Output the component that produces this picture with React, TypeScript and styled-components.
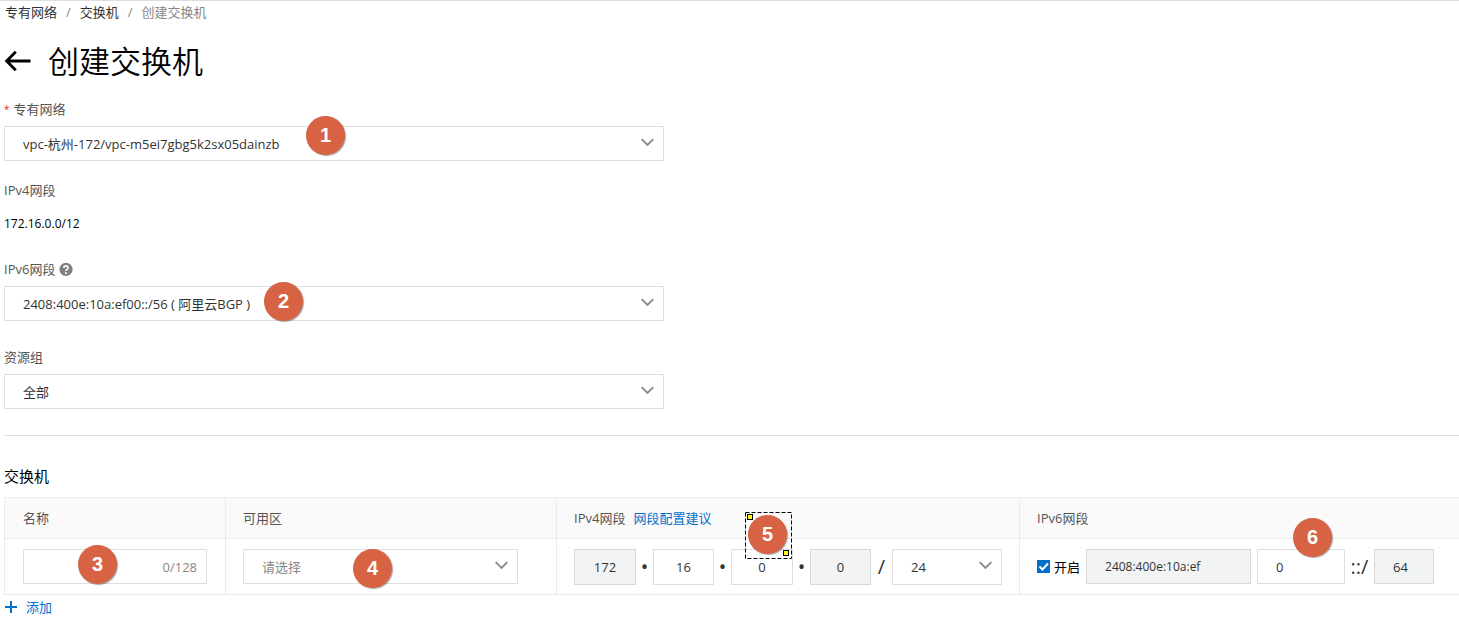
import React from "react";
import styled, { createGlobalStyle, css } from "styled-components";

const GlobalStyle = createGlobalStyle`
  *, *::before, *::after { box-sizing: border-box; }
  body {
    margin: 0;
    background: #fff;
    color: #333;
    font-family: "Open Sans", "Noto Sans CJK SC", sans-serif;
    font-size: 13px;
    line-height: 20px;
    overflow: hidden;
  }
  input, select, button { font: inherit; color: inherit; margin: 0; }
`;

const Page = styled.main`
  border-top: 1px solid #dedede;
  padding-left: 4px;
`;

const Breadcrumb = styled.nav`
  display: flex;
  gap: 9px;
  padding: 1px 0 0 1px;
  a { color: #333; text-decoration: none; }
  span { color: #888; }
`;

const TitleBar = styled.header`
  display: flex;
  align-items: center;
  gap: 16px;
  height: 44px;
  margin: 17px 0 16px;
`;

const BackButton = styled.button`
  display: flex;
  padding: 0;
  border: 0;
  background: none;
  color: #000;
`;

const Title = styled.h1`
  margin: 0;
  color: #000;
  font-size: 31px;
  line-height: 44px;
  font-weight: 350;
`;

const Form = styled.form`
  margin: 0;
`;

const Field = styled.div<{ $tight?: boolean }>`
  max-width: 660px;
  margin-bottom: ${(p) => (p.$tight ? 19 : 26)}px;
`;

const labelStyle = css`
  display: flex;
  align-items: center;
  gap: 4px;
  height: 20px;
  margin-bottom: 7px;
  color: #555;
`;

const Label = styled.label`${labelStyle}`;
const Caption = styled.div`${labelStyle}`;

const Required = styled.span`
  color: #d93026;
  font-size: 10px;
`;

const Value = styled.div`
  color: #000;
  font-size: 12px;
  line-height: 33px;
`;

const SelectBox = styled.div<{ $width?: number; $tall?: boolean }>`
  position: relative;
  width: ${(p) => (p.$width ? `${p.$width}px` : "100%")};
  height: ${(p) => (p.$tall ? 36 : 35)}px;
`;

const NativeSelect = styled.select<{ $muted?: boolean }>`
  appearance: none;
  width: 100%;
  height: 100%;
  padding: 0 40px 0 18px;
  border: 1px solid #dedede;
  border-radius: 0;
  background: #fff;
  color: ${(p) => (p.$muted ? "#888" : "#333")};
`;

const Chevron = styled.svg`
  position: absolute;
  right: 10px;
  top: 12px;
  pointer-events: none;
`;

const Divider = styled.hr`
  margin: 0 0 30px;
  border: 0;
  border-top: 1px solid #dedede;
`;

const SectionTitle = styled.h2`
  margin: 0 0 11px;
  color: #000;
  font-size: 15px;
  line-height: 20px;
  font-weight: 400;
`;

const Table = styled.table`
  width: 100%;
  min-width: 1455px;
  table-layout: fixed;
  border-collapse: separate;
  border-spacing: 0;
  border-top: 1px solid #ebebeb;
  th, td {
    text-align: left;
    font-weight: 400;
    padding: 0 0 0 18px;
    border-left: 1px solid #ebebeb;
    border-bottom: 1px solid #ebebeb;
  }
  th + th, td + td { padding-left: 17px; }
  th { height: 41px; background: #fafafa; color: #555; }
  td { height: 56px; }
`;

const Col = styled.col<{ $width?: number }>`
  width: ${(p) => (p.$width ? `${p.$width}px` : "auto")};
`;

const Inline = styled.div<{ $gap?: number }>`
  position: relative;
  display: flex;
  align-items: center;
  gap: ${(p) => p.$gap ?? 0}px;
`;

const Link = styled.a`
  color: #0070cc;
  text-decoration: none;
`;

const NameBox = styled.label`
  display: flex;
  align-items: center;
  width: 184px;
  height: 35px;
  padding: 0 9px;
  border: 1px solid #dedede;
  color: #888;
  input {
    flex: 1;
    min-width: 0;
    border: 0;
    background: none;
    outline: 0;
  }
`;

const TextInput = styled.input<{ $width: number; $octet?: boolean; $small?: boolean }>`
  width: ${(p) => p.$width}px;
  height: ${(p) => (p.$octet ? 36 : 35)}px;
  padding: ${(p) => (p.$octet ? "0" : "0 18px")};
  text-align: ${(p) => (p.$octet ? "center" : "left")};
  font-size: ${(p) => (p.$small ? 12 : 13)}px;
  border: 1px solid #dedede;
  border-radius: 0;
  background: #fff;
  &:disabled { background: #f2f4f4; border-color: #d8d8d8; }
`;

const Separator = styled.span<{ $width: number }>`
  width: ${(p) => p.$width}px;
  text-align: center;
  font-size: 20px;
`;

const CheckLabel = styled.label`
  display: flex;
  align-items: center;
  gap: 4px;
  margin-right: 6px;
  color: #000;
  white-space: nowrap;
`;

const CheckBox = styled.span`
  position: relative;
  display: flex;
  width: 13px;
  height: 13px;
  input {
    appearance: none;
    width: 13px;
    height: 13px;
    background: #0070cc;
  }
  svg { position: absolute; inset: 0; pointer-events: none; }
`;

const AddButton = styled.button`
  display: flex;
  align-items: center;
  gap: 8px;
  margin-top: 2px;
  padding: 0;
  border: 0;
  background: none;
  color: #0070cc;
`;

const Marker = styled.span<{ $x: number; $y: number }>`
  position: absolute;
  z-index: 1;
  left: ${(p) => p.$x}px;
  top: ${(p) => p.$y}px;
  width: 39px;
  height: 39px;
  border-radius: 50%;
  background: #d86344;
  box-shadow: 1px 1px 1px rgba(0, 0, 0, 0.35);
  color: #fff;
  font: bold 20px/39px "Liberation Sans", Arial, sans-serif;
  text-align: center;
  pointer-events: none;
`;

const Selection = styled.svg`
  position: absolute;
  z-index: 2;
  left: 171px;
  top: -37px;
  pointer-events: none;
`;

type DropdownProps = {
  id?: string;
  label?: string;
  value: string;
  width?: number;
  muted?: boolean;
  tall?: boolean;
  children?: React.ReactNode;
};

function Dropdown({ id, label, value, width, muted, tall, children }: DropdownProps) {
  return (
    <SelectBox $width={width} $tall={tall}>
      <NativeSelect id={id} aria-label={label} $muted={muted}>
        <option>{value}</option>
      </NativeSelect>
      <Chevron width="13" height="9" viewBox="0 0 13 9" fill="none" aria-hidden="true">
        <path d="M0.7 1.2 L6.5 7 L12.3 1.2" stroke="#888" strokeWidth="1.9" />
      </Chevron>
      {children}
    </SelectBox>
  );
}

export default function App() {
  return (
    <>
      <GlobalStyle />
      <Page>
        <Breadcrumb aria-label="导航">
          <a href="#vpc">专有网络</a>
          <span>/</span>
          <a href="#vswitch">交换机</a>
          <span>/</span>
          <span>创建交换机</span>
        </Breadcrumb>
        <TitleBar>
          <BackButton type="button" aria-label="返回">
            <svg width="28" height="22" viewBox="0 0 28 22" fill="none">
              <path d="M26.5 11 H3 M11.8 1.8 L2.6 11 L11.8 20.2" stroke="currentColor" strokeWidth="2.8" />
            </svg>
          </BackButton>
          <Title>创建交换机</Title>
        </TitleBar>
        <Form>
          <Field $tight>
            <Label htmlFor="vpc">
              <Required>*</Required>专有网络
            </Label>
            <Dropdown id="vpc" value="vpc-杭州-172/vpc-m5ei7gbg5k2sx05dainzb">
              <Marker $x={302} $y={-10}>1</Marker>
            </Dropdown>
          </Field>
          <Field $tight>
            <Caption>IPv4网段</Caption>
            <Value>172.16.0.0/12</Value>
          </Field>
          <Field>
            <Label htmlFor="ipv6">
              IPv6网段
              <svg width="14" height="14" viewBox="0 0 14 14" fill="none" aria-hidden="true">
                <circle cx="7" cy="7.4" r="6.6" fill="#808080" />
                <path d="M4.9 5.9 C4.9 3.2 9.1 3.2 9.1 5.8 C9.1 7.4 7 7.2 7 9" stroke="#fff" strokeWidth="1.6" />
                <circle cx="7" cy="11" r="1" fill="#fff" />
              </svg>
            </Label>
            <Dropdown id="ipv6" value="2408:400e:10a:ef00::/56 ( 阿里云BGP )">
              <Marker $x={260} $y={-4}>2</Marker>
            </Dropdown>
          </Field>
          <Field>
            <Label htmlFor="group">资源组</Label>
            <Dropdown id="group" value="全部" />
          </Field>
          <Divider />
          <SectionTitle>交换机</SectionTitle>
          <Table>
            <colgroup>
              <Col $width={221} />
              <Col $width={331} />
              <Col $width={463} />
              <Col />
            </colgroup>
            <thead>
              <tr>
                <th>名称</th>
                <th>可用区</th>
                <th>
                  <Inline $gap={8}>
                    IPv4网段
                    <Link href="#advice">网段配置建议</Link>
                  </Inline>
                </th>
                <th>IPv6网段</th>
              </tr>
            </thead>
            <tbody>
              <tr>
                <td>
                  <Inline>
                    <NameBox>
                      <input type="text" aria-label="名称" />
                      0/128
                    </NameBox>
                    <Marker $x={55} $y={-4}>3</Marker>
                  </Inline>
                </td>
                <td>
                  <Dropdown label="可用区" value="请选择" width={275} muted>
                    <Marker $x={110} $y={0}>4</Marker>
                  </Dropdown>
                </td>
                <td>
                  <Inline>
                    <TextInput $width={62} $octet disabled defaultValue="172" aria-label="IPv4 1" />
                    <Separator $width={17}>•</Separator>
                    <TextInput $width={61} $octet defaultValue="16" aria-label="IPv4 2" />
                    <Separator $width={17}>•</Separator>
                    <TextInput $width={62} $octet defaultValue="0" aria-label="IPv4 3" />
                    <Separator $width={17}>•</Separator>
                    <TextInput $width={61} $octet disabled defaultValue="0" aria-label="IPv4 4" />
                    <Separator $width={21}>/</Separator>
                    <Dropdown label="IPv4 掩码" value="24" width={110} tall />
                    <Marker $x={174} $y={-34}>5</Marker>
                    <Selection width="47" height="47" viewBox="0 0 47 47" fill="none">
                      <rect x="0.5" y="0.5" width="46" height="46" stroke="#000" strokeDasharray="4 2" />
                      <rect x="2.5" y="2.5" width="5" height="5" fill="#ff0" stroke="#000" />
                      <rect x="38.5" y="38.5" width="5" height="5" fill="#ff0" stroke="#000" />
                    </Selection>
                  </Inline>
                </td>
                <td>
                  <Inline>
                    <CheckLabel>
                      <CheckBox>
                        <input type="checkbox" defaultChecked />
                        <svg width="13" height="13" viewBox="0 0 13 13" fill="none" aria-hidden="true">
                          <path d="M2.5 6.5 L5.5 9.5 L11 3.5" stroke="#fff" strokeWidth="2" />
                        </svg>
                      </CheckBox>
                      开启
                    </CheckLabel>
                    <TextInput $width={165} $small disabled defaultValue="2408:400e:10a:ef" aria-label="IPv6 前缀" />
                    <Separator $width={6} />
                    <TextInput $width={88} defaultValue="0" aria-label="IPv6 子网" />
                    <Separator $width={29}>::/</Separator>
                    <TextInput $width={60} disabled defaultValue="64" aria-label="IPv6 掩码" />
                    <Marker $x={256} $y={-31}>6</Marker>
                  </Inline>
                </td>
              </tr>
            </tbody>
          </Table>
          <AddButton type="button">
            <svg width="14" height="14" viewBox="0 0 14 14" fill="none" aria-hidden="true">
              <path d="M7 1 V13 M1 7 H13" stroke="currentColor" strokeWidth="2" />
            </svg>
            添加
          </AddButton>
        </Form>
      </Page>
    </>
  );
}
